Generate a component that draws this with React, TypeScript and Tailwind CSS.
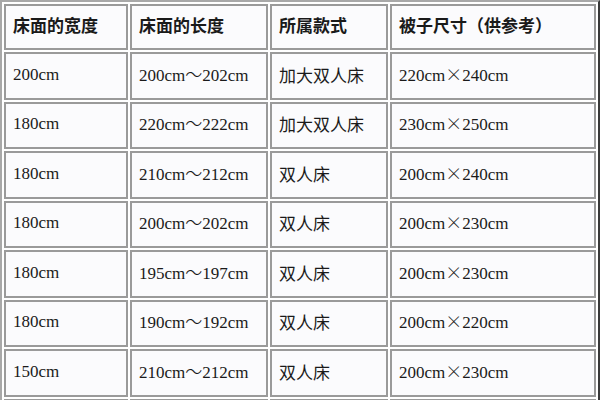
import React from "react";

const headers = ["床面的宽度", "床面的长度", "所属款式", "被子尺寸（供参考）"];

// width, length, style, quilt size
const rows: [string, string, string, string][] = [
  ["200cm", "200cm～202cm", "加大双人床", "220cm×240cm"],
  ["180cm", "220cm～222cm", "加大双人床", "230cm×250cm"],
  ["180cm", "210cm～212cm", "双人床", "200cm×240cm"],
  ["180cm", "200cm～202cm", "双人床", "200cm×230cm"],
  ["180cm", "195cm～197cm", "双人床", "200cm×230cm"],
  ["180cm", "190cm～192cm", "双人床", "200cm×220cm"],
  ["150cm", "210cm～212cm", "双人床", "200cm×230cm"],
  ["", "", "", ""],
];

const colWidths = ["w-[124px]", "w-[138px]", "w-[118px]", "w-[206px]"];

// SimSun-like rendering: serif latin, full-width ～ and × from the CJK font
function CellText({ text }: { text: string }) {
  const parts = text.split(/([～×])/);
  return (
    <>
      {parts.map((p, i) =>
        p === "×" ? (
          <span key={i} className="inline-block w-[17px] text-center leading-none font-['Noto_Sans_CJK_SC',sans-serif] font-extralight">
            ×
          </span>
        ) : p === "～" ? (
          <span key={i} className="font-['Noto_Sans_CJK_SC',sans-serif] font-light">
            ～
          </span>
        ) : (
          <span key={i}>{p}</span>
        )
      )}
    </>
  );
}

export default function App() {
  return (
    <div className="w-[600px] h-[400px] overflow-hidden bg-white">
      <table className="table-fixed border-separate border-spacing-[2px] border-2 border-t-[#a8a8a8] border-l-[#a8a8a8] border-r-[#3a3a3a] border-b-[#3a3a3a] bg-white text-[17px] text-[#1a1a1a] font-['Liberation_Serif','Noto_Sans_CJK_SC',serif]">
        <thead>
          <tr>
            {headers.map((h, i) => (
              <th
                key={h}
                className={`${colWidths[i]} h-[46px] border-2 border-[#9a9a9a] bg-[#fbfbfd] pl-[7px] pb-[5px] text-left font-bold font-['Noto_Sans_CJK_SC',sans-serif] align-middle leading-none`}
              >
                {h}
              </th>
            ))}
          </tr>
        </thead>
        <tbody>
          {rows.map((r, ri) => (
            <tr key={ri}>
              {r.map((c, ci) => (
                <td
                  key={ci}
                  className={`${colWidths[ci]} ${ri % 2 === 0 ? "h-[48px]" : "h-[47px]"} border-2 border-[#9a9a9a] bg-[#fbfbfd] pl-[7px] pb-[4px] align-middle leading-none ${
                    ci === 2 ? "font-['Noto_Sans_CJK_SC',sans-serif]" : ""
                  }`}
                >
                  <CellText text={c} />
                </td>
              ))}
            </tr>
          ))}
        </tbody>
      </table>
    </div>
  );
}
